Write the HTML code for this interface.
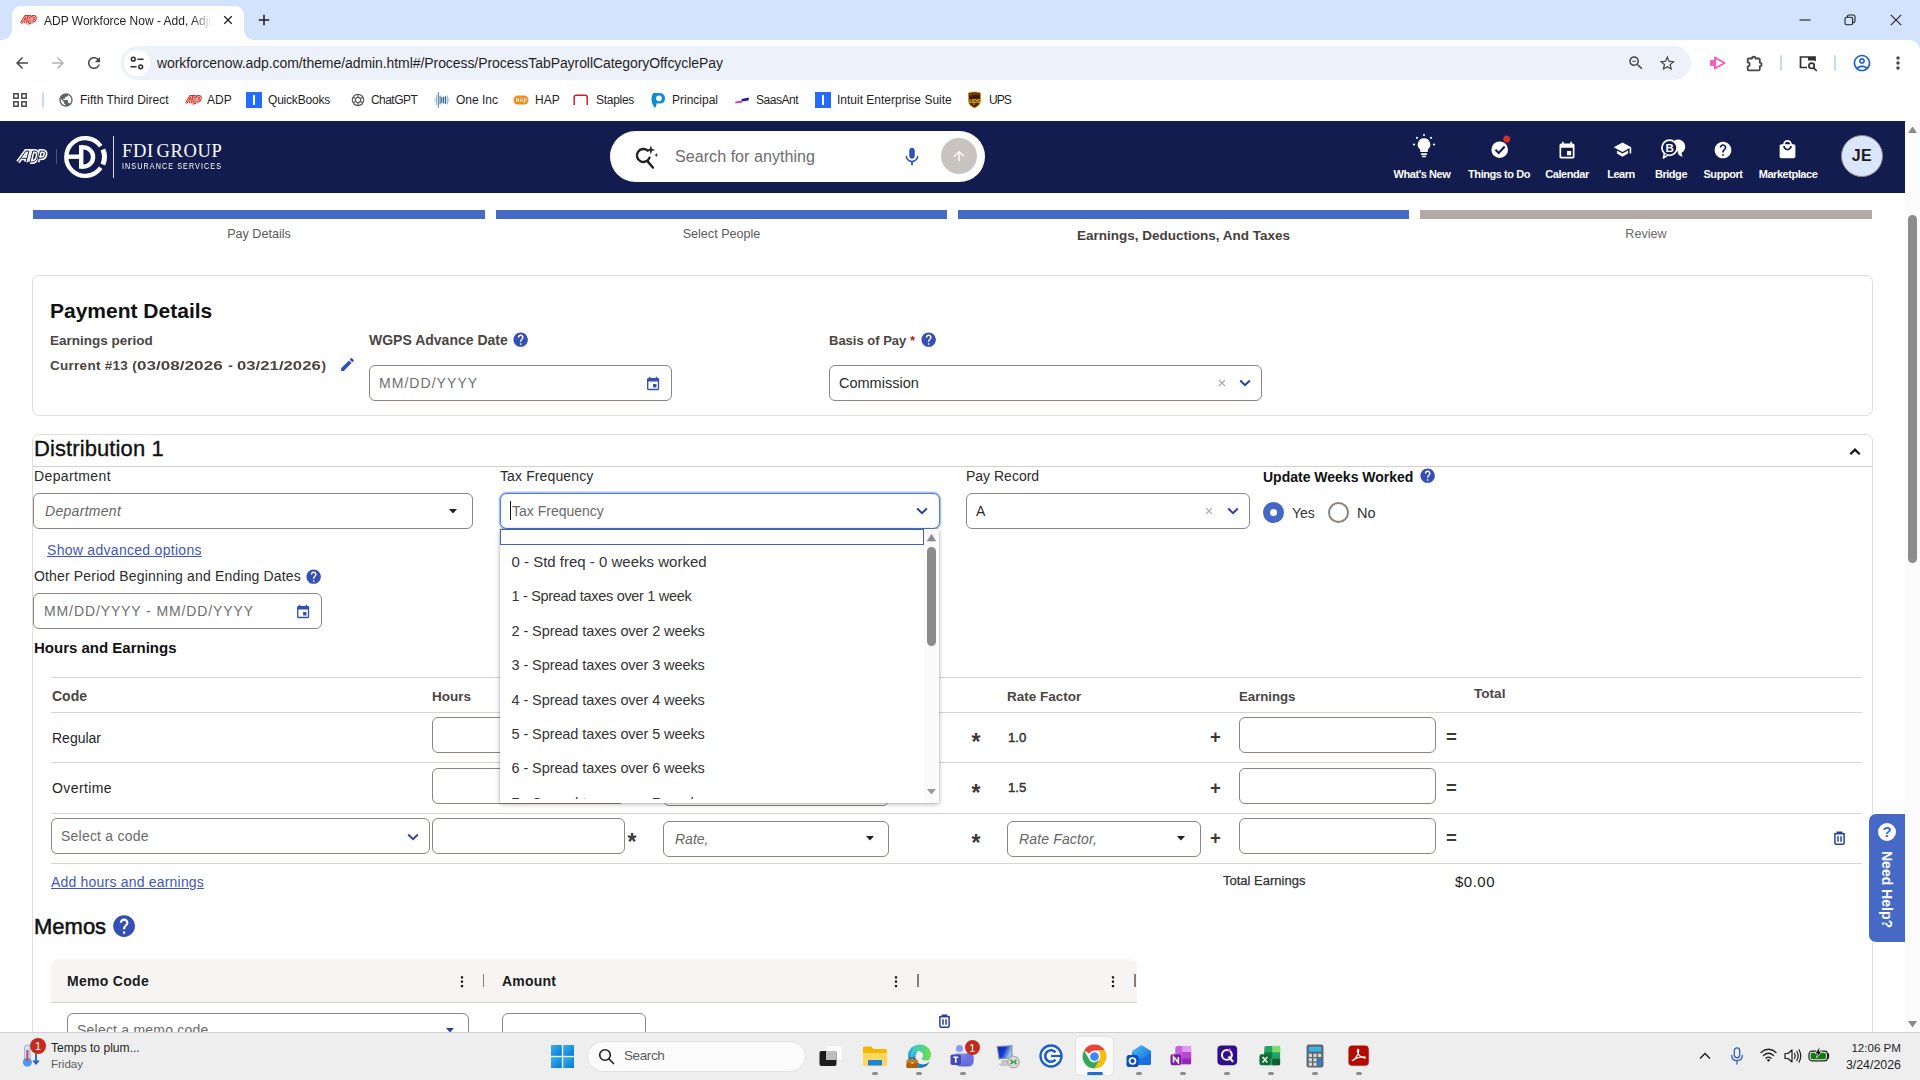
<!DOCTYPE html>
<html lang="en">
<head>
<meta charset="utf-8">
<title>ADP Workforce Now - Add, Adjust</title>
<style>
*{box-sizing:border-box;margin:0;padding:0}
html,body{width:1920px;height:1080px;overflow:hidden;background:#fff;font-family:"Liberation Sans",sans-serif;color:#1f1f1f}
body{position:relative}
.a{position:absolute}
.t{position:absolute;white-space:nowrap;height:20px;line-height:20px}
svg{position:absolute;overflow:visible}
/* ---------- browser chrome ---------- */
#tabstrip{left:0;top:0;width:1920px;height:40px;background:#d3e3fd}
#tab{left:12px;top:6px;width:232px;height:34px;background:#fff;border-radius:9px 9px 0 0}
#tab:before,#tab:after{content:"";position:absolute;bottom:0;width:10px;height:10px;background:radial-gradient(circle at 0 0,rgba(255,255,255,0) 9.5px,#fff 10px)}
#tab:before{left:-10px}
#tab:after{right:-10px;transform:scaleX(-1)}
#toolbar{left:0;top:40px;width:1920px;height:42px;background:#fff}
#omni{left:121px;top:46px;width:1570px;height:34px;border-radius:17px;background:#edf2fa}
#siteinfo{left:124px;top:50px;width:26px;height:26px;border-radius:13px;background:#fff}
#bookmarks{left:0;top:82px;width:1920px;height:39px;background:#fff}
.bm{font-size:12px;color:#1f1f1f;top:90px}
/* ---------- ADP header ---------- */
#hdr{left:0;top:121px;width:1905px;height:71.500px;background:#121c4e}
#search{left:610px;top:131px;width:375px;height:51px;border-radius:26px;background:#fff}
.nav{color:#fff;font-size:11px;font-weight:bold;top:164px;text-align:center;letter-spacing:-0.45px}
/* ---------- stepper ---------- */
.bar{top:210px;height:9px;background:#4669c6}
.step{top:224px;font-size:12.600px;color:#5a5a5a;text-align:center}
/* ---------- cards ---------- */
.card{border:1px solid #e2dedb;border-radius:7px;background:#fff}
.inp{position:absolute;height:36px;border:1px solid #8c8682;border-radius:6px;background:#fff}
.lbl{font-size:14px;color:#2b2b2b}
.lblb{font-size:14px;font-weight:bold;color:#4a4542}
.ph{font-size:14px;color:#6e6e6e}
.hl{position:absolute;height:1px;background:#d9d4d0}
.link{color:#3f57b5;text-decoration:underline;font-size:14px}
.rowl{font-size:14.500px;color:#1f1f1f}
.rf{font-size:13.200px;color:#333;-webkit-text-stroke:0.450px #333;margin-top:0.400px}
.op{font-size:23px;font-weight:bold;color:#3d3835;width:10px;text-align:center;margin-top:0.800px}
.pl{font-size:18.500px;font-weight:bold;color:#3d3835;width:12px;text-align:center;margin-top:0.700px;margin-left:0.400px}
.ddi{font-size:15px;color:#333}
/* ---------- taskbar ---------- */
.ind{top:1072px;width:6px;height:3px;border-radius:1.500px;background:#8d8d8d}
#taskbar{left:0;top:1032px;width:1920px;height:48px;background:#eeeeee;border-top:1px solid #cfcfcf}
</style>
</head>
<body>

<!-- ======= BROWSER CHROME ======= -->
<div id="tabstrip" class="a"></div>
<div id="tab" class="a"></div>
<div id="toolbar" class="a"></div>
<div id="omni" class="a"></div>
<div id="siteinfo" class="a"></div>
<div id="bookmarks" class="a"></div>
<!-- tab favicon (ADP red) -->
<svg style="left:20px;top:15px" width="17" height="9.500" viewBox="0 0 32 15" preserveAspectRatio="none"><g fill="none" stroke-linejoin="miter" stroke-miterlimit="2"><g stroke="#d0271d" stroke-width="4.300"><path d="M2 13L10 2H12.800L10 13M5.500 9.300H11"/><path d="M14 13L16.800 2H18Q22.800 2 21.600 7.500Q20.400 13 15.500 13H14"/><path d="M21.500 13L24.300 2H26Q30.200 2 29.400 5.600Q28.600 9.300 25 9.300H22.500"/></g><g stroke="#fff" stroke-width="1.100"><path d="M2 13L10 2H12.800L10 13M5.500 9.300H11"/><path d="M14 13L16.800 2H18Q22.800 2 21.600 7.500Q20.400 13 15.500 13H14"/><path d="M21.500 13L24.300 2H26Q30.200 2 29.400 5.600Q28.600 9.300 25 9.300H22.500"/></g></g></svg>
<div class="t" id="tabtitle" style="left:44px;top:10.700px;font-size:12px;color:#1f1f1f;width:170px;overflow:hidden;-webkit-mask-image:linear-gradient(90deg,#000 148px,transparent 168px);mask-image:linear-gradient(90deg,#000 148px,transparent 168px)">ADP Workforce Now - Add, Adjust</div>
<svg style="left:220px;top:12px" width="16" height="16" viewBox="0 0 24 24"><path fill="#1f1f1f" d="M18.3 7.1L16.9 5.7 12 10.6 7.1 5.7 5.7 7.1 10.6 12 5.7 16.9 7.1 18.3 12 13.4 16.9 18.3 18.3 16.9 13.4 12z"/></svg>
<svg style="left:255px;top:11px" width="18" height="18" viewBox="0 0 24 24"><path fill="#1f1f1f" d="M19 13h-6v6h-2v-6H5v-2h6V5h2v6h6v2z"/></svg>
<div class="a" style="left:1910px;top:40px;width:10px;height:10px;background:radial-gradient(circle at 0 100%,#fff 9.500px,#d3e3fd 10px)"></div>
<!-- window controls -->
<svg style="left:1799px;top:14px" width="12" height="12" viewBox="0 0 12 12"><path d="M0.5 6H11.5" stroke="#1f1f1f" stroke-width="1.1"/></svg>
<svg style="left:1844px;top:14px" width="12" height="12" viewBox="0 0 12 12"><g fill="none" stroke="#1f1f1f" stroke-width="1.1"><rect x="1" y="3.2" width="7.6" height="7.6" rx="1.6"/><path d="M3.4 3.2V2.6Q3.4 1 5 1H9.2Q11 1 11 2.8V7Q11 8.6 9.4 8.6H8.8"/></g></svg>
<svg style="left:1890px;top:14px" width="12" height="12" viewBox="0 0 12 12"><path d="M0.8 0.8L11.2 11.2M11.2 0.8L0.8 11.2" stroke="#1f1f1f" stroke-width="1.1"/></svg>
<!-- nav buttons -->
<svg style="left:13px;top:54px" width="18" height="18" viewBox="0 0 24 24"><path fill="#474747" d="M20 11H7.83l5.59-5.59L12 4l-8 8 8 8 1.41-1.41L7.83 13H20v-2z"/></svg>
<svg style="left:49px;top:54px" width="18" height="18" viewBox="0 0 24 24"><path fill="#b4b4b4" d="M12 4l-1.41 1.41L16.17 11H4v2h12.17l-5.58 5.59L12 20l8-8z"/></svg>
<svg style="left:85px;top:54px" width="18" height="18" viewBox="0 0 24 24"><path fill="#474747" d="M17.65 6.35C16.2 4.9 14.21 4 12 4c-4.42 0-7.99 3.58-7.99 8s3.57 8 7.99 8c3.73 0 6.84-2.55 7.73-6h-2.08c-.82 2.33-3.04 4-5.65 4-3.31 0-6-2.69-6-6s2.69-6 6-6c1.66 0 3.14.69 4.22 1.78L13 11h7V4l-2.35 2.35z"/></svg>
<!-- site info (tune) -->
<svg style="left:129px;top:55px" width="16" height="16" viewBox="0 0 16 16"><g fill="none" stroke="#303030" stroke-width="1.5" stroke-linecap="round"><circle cx="4.3" cy="4.2" r="1.9"/><path d="M9 4.2H14"/><circle cx="11.7" cy="11.8" r="1.9"/><path d="M2 11.8H7"/></g></svg>
<div class="t" id="url" style="left:157px;top:53px;font-size:14px;letter-spacing:-0.070px;color:#1f1f1f">workforcenow.adp.com/theme/admin.html#/Process/ProcessTabPayrollCategoryOffcyclePay</div>
<!-- omnibox right icons -->
<svg style="left:1627px;top:54px" width="18" height="18" viewBox="0 0 24 24"><path fill="#474747" d="M15.5 14h-.79l-.28-.27C15.41 12.59 16 11.11 16 9.5 16 5.91 13.09 3 9.5 3S3 5.91 3 9.5 5.91 16 9.5 16c1.61 0 3.09-.59 4.23-1.57l.27.28v.79l5 4.99L20.49 19l-4.99-5zm-6 0C7.01 14 5 11.99 5 9.500S7.010 5 9.500 5 14 7.010 14 9.500 11.990 14 9.500 14zM7 9h5v1.300H7z"/></svg>
<svg style="left:1658.400px;top:53.700px" width="18.600" height="18.600" viewBox="0 0 24 24"><path fill="#474747" d="M22 9.24l-7.190-.62L12 2 9.190 8.630 2 9.240l5.460 4.730L5.820 21 12 17.270 18.180 21l-1.630-7.030L22 9.240zM12 15.400l-3.760 2.270 1-4.280-3.320-2.880 4.380-.38L12 6.100l1.710 4.040 4.380.38-3.320 2.880 1 4.280L12 15.400z"/></svg>
<!-- pink extension -->
<svg style="left:1709px;top:55px" width="18" height="16" viewBox="0 0 18 16"><g fill="none" stroke="#f35cc0" stroke-width="2" stroke-linejoin="round"><path d="M6 2.500L15.500 8 6 13.500Z"/></g><rect x="1" y="5" width="5" height="6" rx="1" fill="#f35cc0"/></svg>
<!-- puzzle -->
<svg style="left:1744.500px;top:52.500px" width="19" height="19" viewBox="0 0 19 19"><path d="M3.700 5.500H7A1.750 1.750 0 0 1 10.500 5.500H13.800Q14.800 5.500 14.800 6.500V9.700A1.750 1.750 0 0 1 14.800 13.200V16.300Q14.800 17.300 13.800 17.300H3.700Q2.700 17.300 2.700 16.300V13.400A2 2 0 0 0 2.700 9.400V6.500Q2.700 5.500 3.700 5.500Z" fill="none" stroke="#474747" stroke-width="1.800" stroke-linejoin="round"/></svg>
<div class="a" style="left:1780px;top:55px;width:2px;height:16px;background:#c9d8f3;border-radius:1px"></div>
<!-- media control -->
<svg style="left:1797.800px;top:54px" width="20" height="18" viewBox="0 0 20 18"><g fill="none" stroke="#303030" stroke-width="1.7"><path d="M9 13.500H2.500V3H17V7"/><circle cx="13.600" cy="11.800" r="2.700"/><path d="M15.600 13.800L18.300 16.500" stroke-linecap="round"/></g><path d="M10 3H17V6.500H10Z" fill="#303030"/></svg>
<div class="a" style="left:1834px;top:55px;width:2px;height:16px;background:#c9d8f3;border-radius:1px"></div>
<svg style="left:1852px;top:53px" width="20" height="20" viewBox="0 0 24 24"><path fill="#1a5ecc" d="M12 2C6.480 2 2 6.480 2 12s4.480 10 10 10 10-4.480 10-10S17.520 2 12 2zM7.350 18.500C8.660 17.560 10.260 17 12 17s3.340.56 4.650 1.500c-1.310.94-2.910 1.500-4.650 1.500s-3.340-.56-4.650-1.500zm10.790-1.380C16.450 15.800 14.320 15 12 15s-4.450.8-6.140 2.120C4.700 15.730 4 13.950 4 12c0-4.420 3.580-8 8-8s8 3.580 8 8c0 1.950-.7 3.730-1.860 5.120zM12 6c-1.930 0-3.500 1.570-3.500 3.500S10.070 13 12 13s3.500-1.570 3.500-3.500S13.930 6 12 6zm0 5c-.83 0-1.500-.67-1.500-1.500S11.170 8 12 8s1.500.67 1.500 1.500S12.830 11 12 11z"/></svg>
<svg style="left:1888px;top:53px" width="20" height="20" viewBox="0 0 24 24"><path fill="#474747" d="M12 8c1.100 0 2-.9 2-2s-.9-2-2-2-2 .9-2 2 .9 2 2 2zm0 2c-1.100 0-2 .9-2 2s.9 2 2 2 2-.9 2-2-.9-2-2-2zm0 6c-1.100 0-2 .9-2 2s.9 2 2 2 2-.9 2-2-.9-2-2-2z"/></svg>
<!-- bookmarks -->
<svg style="left:13px;top:93px" width="14" height="14" viewBox="0 0 14 14"><g fill="none" stroke="#474747" stroke-width="1.5"><rect x="0.800" y="0.800" width="4.400" height="4.400"/><rect x="8.800" y="0.800" width="4.400" height="4.400"/><rect x="0.800" y="8.800" width="4.400" height="4.400"/><rect x="8.800" y="8.800" width="4.400" height="4.400"/></g></svg>
<div class="a" style="left:42px;top:92px;width:2px;height:16px;background:#c9d8f3;border-radius:1px"></div>
<svg style="left:58px;top:92px" width="16" height="16" viewBox="0 0 24 24"><path fill="#5f6368" d="M12 2C6.480 2 2 6.480 2 12s4.480 10 10 10 10-4.480 10-10S17.520 2 12 2zm-1 17.930c-3.950-.49-7-3.850-7-7.930 0-.62.08-1.210.21-1.790L9 15v1c0 1.100.9 2 2 2v1.930zm6.900-2.540c-.26-.81-1-1.390-1.900-1.390h-1v-3c0-.55-.45-1-1-1H8v-2h2c.55 0 1-.45 1-1V7h2c1.100 0 2-.9 2-2v-.41c2.930 1.190 5 4.060 5 7.410 0 2.080-.8 3.970-2.100 5.390z"/></svg>
<div class="t bm" id="bm1" style="left:80px">Fifth Third Direct</div>
<svg style="left:185px;top:95px" width="17" height="9.500" viewBox="0 0 32 15" preserveAspectRatio="none"><g fill="none" stroke-linejoin="miter" stroke-miterlimit="2"><g stroke="#d0271d" stroke-width="4.300"><path d="M2 13L10 2H12.800L10 13M5.500 9.300H11"/><path d="M14 13L16.800 2H18Q22.800 2 21.600 7.500Q20.400 13 15.500 13H14"/><path d="M21.500 13L24.300 2H26Q30.200 2 29.400 5.600Q28.600 9.300 25 9.300H22.500"/></g><g stroke="#fff" stroke-width="1.100"><path d="M2 13L10 2H12.800L10 13M5.500 9.300H11"/><path d="M14 13L16.800 2H18Q22.800 2 21.600 7.500Q20.400 13 15.500 13H14"/><path d="M21.500 13L24.300 2H26Q30.200 2 29.400 5.600Q28.600 9.300 25 9.300H22.500"/></g></g></svg>
<div class="t bm" id="bm2" style="left:207px">ADP</div>
<div class="a" style="left:246px;top:92px;width:16px;height:16px;background:#236cff"></div><div class="a" style="left:253px;top:95px;width:2px;height:10px;background:#fff"></div>
<div class="t bm" id="bm3" style="left:268px;letter-spacing:-0.200px">QuickBooks</div>
<svg style="left:351px;top:93px" width="14" height="14" viewBox="0 0 14 14"><g fill="none" stroke="#5a5a5a" stroke-width="1.200"><circle cx="7" cy="7" r="5.600"/><circle cx="7" cy="7" r="2.600"/><path d="M7 1.400V4.400M7 9.600V12.600M2.150 4.200L4.750 5.700M9.250 8.300L11.850 9.800M2.150 9.800L4.750 8.300M9.250 5.700L11.850 4.200"/></g></svg>
<div class="t bm" id="bm4" style="left:371px;letter-spacing:-0.550px">ChatGPT</div>
<svg style="left:434px;top:91px" width="16" height="18" viewBox="0 0 16 18"><g stroke-linecap="round" fill="none"><path d="M1 7.500V10.500M14.800 7.500V10.500" stroke="#a9c3d6" stroke-width="0.900"/><path d="M2.700 4.500V13.500M13.200 5V13" stroke="#7fa6c4" stroke-width="1"/><path d="M4.400 1.500V16.500" stroke="#5d8db1" stroke-width="1.100"/><path d="M6.100 5V13M11.500 5.500V12.500" stroke="#3f7199" stroke-width="1.100"/><path d="M7.800 6.500V11.500M9.700 6V12" stroke="#2c5a80" stroke-width="1.200"/></g></svg>
<div class="t bm" id="bm5" style="left:456px">One Inc</div>
<svg style="left:513px;top:95px" width="16" height="10" viewBox="0 0 16 10"><rect x="0.500" y="0.500" width="15" height="9" rx="4.500" fill="#f28a1e"/><path d="M3.500 3V7M3.500 5H5.500M5.500 3V7M7.500 7V4.500Q7.500 3.500 8.500 3.500Q9.500 3.500 9.500 4.500V7M11.500 3.500V8M11.500 3.500H12.500Q13.500 3.500 13.500 4.500Q13.500 5.500 12.500 5.500H11.500" stroke="#fff" stroke-width="0.800" fill="none"/></svg>
<div class="t bm" id="bm6" style="left:535px">HAP</div>
<svg style="left:573px;top:94px" width="16" height="12" viewBox="0 0 16 12"><path d="M1.200 11V3.300Q1.200 1.300 3.200 1.300H12.200Q14.200 1.300 14.200 3.300V11" fill="none" stroke="#cc1f2d" stroke-width="1.500"/></svg>
<div class="t bm" id="bm7" style="left:596px;letter-spacing:-0.280px">Staples</div>
<svg style="left:650px;top:92px" width="16" height="16" viewBox="0 0 16 16"><path d="M3 1.500Q2.500 1 3.500 1H9Q15 1 15 6.500Q15 11.500 9.500 11.500Q8 11.500 7 11L5.500 15.500Q5 16 4.500 15.500Q1 11 1.500 6Q2 2.500 3 1.500Z" fill="#0a8ed0"/><circle cx="9" cy="6.300" r="2.900" fill="#fff"/></svg>
<div class="t bm" id="bm8" style="left:672px">Principal</div>
<svg style="left:735px;top:94px" width="15" height="12" viewBox="0 0 15 12"><path d="M1 8.500Q3.500 7.500 6 8" stroke="#e6269a" stroke-width="1.800" fill="none" stroke-linecap="round"/><path d="M6.500 5L14 3.500L13.500 6.500L6.500 7.500Z" fill="#1c1f8f"/></svg>
<div class="t bm" id="bm9" style="left:756px;letter-spacing:-0.450px">SaasAnt</div>
<div class="a" style="left:815px;top:92px;width:16px;height:16px;background:#236cff"></div><div class="a" style="left:822px;top:95px;width:2px;height:10px;background:#fff"></div>
<div class="t bm" id="bm10" style="left:837px">Intuit Enterprise Suite</div>
<svg style="left:967px;top:91px" width="15" height="18" viewBox="0 0 15 18"><path d="M1 1.500Q7.500 -0.500 14 1.500V10Q14 14.500 7.500 17.500Q1 14.500 1 10Z" fill="#e8a814"/><path d="M1.900 2.300Q7.500 0.600 13.100 2.300V10Q13.100 13.800 7.500 16.400Q1.900 13.800 1.900 10Z" fill="#3b1d08"/><path d="M1.900 2.300Q7.500 0.600 13.100 2.300V4Q7 3 1.900 6Z" fill="#6b3a10"/><text x="7.500" y="11.500" font-family="Liberation Sans" font-size="6.800" font-weight="bold" text-anchor="middle" fill="#f3b41c" letter-spacing="-0.300">ups</text></svg>
<div class="t bm" id="bm11" style="left:989px;letter-spacing:-1px">UPS</div>

<!-- ======= ADP HEADER ======= -->
<div id="hdr" class="a"></div>
<div id="search" class="a"></div>
<!-- ADP white logo -->
<svg style="left:15.600px;top:149px" width="32" height="15" viewBox="0 0 32 15"><g fill="none" stroke-linejoin="miter" stroke-miterlimit="2"><g stroke="#fff" stroke-width="4"><path d="M2 13L10 2H12.800L10 13M5.500 9.300H11"/><path d="M14 13L16.800 2H18Q22.800 2 21.600 7.500Q20.400 13 15.500 13H14"/><path d="M21.500 13L24.300 2H26Q30.200 2 29.400 5.600Q28.600 9.300 25 9.300H22.500"/></g><g stroke="#121c4e" stroke-width="1"><path d="M2 13L10 2H12.800L10 13M5.500 9.300H11"/><path d="M14 13L16.800 2H18Q22.800 2 21.600 7.500Q20.400 13 15.500 13H14"/><path d="M21.500 13L24.300 2H26Q30.200 2 29.400 5.600Q28.600 9.300 25 9.300H22.500"/></g></g></svg>
<div class="a" style="left:56px;top:149px;width:1px;height:15px;background:#4b5380"></div>
<!-- FDI logo -->
<svg style="left:63px;top:135px" width="45" height="44" viewBox="63 135 45 44"><g fill="none" stroke="#fff" stroke-width="4.400"><path d="M100.700 146.200A18.900 18.900 0 1 0 100.700 167.800"/><path d="M102.900 149.500A18.900 18.900 0 0 1 102.900 164.500" stroke-width="5"/><path d="M81.200 145.200V168.700"/><path d="M81.200 147.400H83.500A9.600 9.600 0 0 1 83.500 166.600H81.200"/><path d="M68 156.700H81"/></g></svg>
<div class="a" style="left:113px;top:136px;width:1.400px;height:42px;background:#d5d7e2"></div>
<div class="t" id="fdi" style="left:122px;top:141px;font-family:'Liberation Serif',serif;font-size:18.500px;color:#fff;letter-spacing:0.650px">FDI<span style="letter-spacing:-2px"> </span>GROUP</div>
<div class="t" id="ins" style="left:122px;top:156px;font-size:8.500px;color:#fff;letter-spacing:1.300px;transform:scaleX(0.843);transform-origin:0 50%">INSURANCE SERVICES</div>
<!-- search -->
<svg style="left:630.500px;top:142px" width="29.500" height="29.500" viewBox="0 0 26 26"><g fill="none" stroke="#222" stroke-width="2.150" stroke-linecap="round"><path d="M14.700 7.600A5.700 5.700 0 1 0 16.300 13.800"/><path d="M15 17.500L19.300 22.500"/></g><path d="M17.500 3L18.500 6 21.500 7 18.500 8 17.500 11 16.500 8 13.500 7 16.500 6Z" fill="#2a2a2a"/><path d="M22.300 9.500L22.800 11 24.300 11.500 22.800 12 22.300 13.500 21.800 12 20.300 11.500 21.800 11Z" fill="#2a2a2a"/></svg>
<div class="t" id="sph" style="left:675px;top:146px;font-size:16.150px;color:#6d6d6d">Search for anything</div>
<svg style="left:901px;top:146px" width="22" height="22" viewBox="0 0 24 24"><path fill="#3550b4" d="M12 14c1.660 0 2.990-1.340 2.990-3L15 5c0-1.660-1.340-3-3-3S9 3.340 9 5v6c0 1.660 1.340 3 3 3zm5.300-3c0 3-2.540 5.100-5.300 5.100S6.700 14 6.700 11H5c0 3.410 2.720 6.230 6 6.720V21h2v-3.280c3.280-.48 6-3.300 6-6.720h-1.700z"/></svg>
<div class="a" style="left:941px;top:138px;width:36px;height:36px;border-radius:18px;background:#c9c4bf"></div>
<svg style="left:951px;top:148px" width="16" height="16" viewBox="0 0 24 24"><path fill="#fff" d="M4 12l1.410 1.410L11 7.830V20h2V7.830l5.580 5.590L20 12l-8-8-8 8z"/></svg>
<!-- nav icons -->
<svg style="left:1411px;top:133px" width="26" height="26" viewBox="0 0 26 26"><g fill="#fff"><path d="M13 5.200A6.300 6.300 0 0 0 9.200 16.500V19H16.800V16.500A6.300 6.300 0 0 0 13 5.200Z"/><rect x="9.800" y="20.200" width="6.400" height="1.700" rx="0.800"/><rect x="10.800" y="22.800" width="4.400" height="1.500" rx="0.700"/><circle cx="13" cy="2" r="1.100"/><circle cx="6" cy="4.800" r="1.100"/><circle cx="20" cy="4.800" r="1.100"/><circle cx="3" cy="11.500" r="1.100"/><circle cx="23" cy="11.500" r="1.100"/></g></svg>
<div class="t nav" id="n1" style="left:1372px;width:100px">What's New</div>
<svg style="left:1489px;top:134px" width="24" height="26" viewBox="0 0 24 26"><circle cx="10.700" cy="15.700" r="8.300" fill="#fff"/><path d="M6.500 15.800L9.700 19L15.700 12.500" fill="none" stroke="#121c4e" stroke-width="2.100"/><circle cx="17.700" cy="5" r="3.900" fill="#d93025" stroke="#121c4e" stroke-width="0.800"/></svg>
<div class="t nav" id="n2" style="left:1449px;width:100px">Things to Do</div>
<svg style="left:1557px;top:140.500px" width="20" height="20" viewBox="0 0 24 24"><path fill="#fff" d="M17 12h-5v5h5v-5zM16 1v2H8V1H6v2H5c-1.110 0-1.990.9-1.990 2L3 19c0 1.100.89 2 2 2h14c1.100 0 2-.9 2-2V5c0-1.100-.9-2-2-2h-1V1h-2zm3 18H5V8h14v11z"/></svg>
<div class="t nav" id="n3" style="left:1517px;width:100px">Calendar</div>
<svg style="left:1612.500px;top:140.300px" width="19" height="19" viewBox="0 0 24 24"><path fill="#fff" d="M5 13.180v4L12 21l7-3.820v-4L12 17l-7-3.820zM12 3L1 9l11 6 9-4.910V17h2V9L12 3z"/></svg>
<div class="t nav" id="n4" style="left:1571px;width:100px">Learn</div>
<svg style="left:1659px;top:138px" width="26" height="22" viewBox="0 0 26 22"><path d="M15.500 2.300A7 7 0 0 1 22.500 15L23.500 19L19.500 16.800" fill="#fff"/><circle cx="10.500" cy="9.800" r="7.600" fill="#121c4e" stroke="#fff" stroke-width="1.700"/><path d="M5.500 15.500L4.300 20L8.500 17.300" fill="#121c4e" stroke="#fff" stroke-width="1.500" stroke-linejoin="round"/><text x="10.600" y="14" font-family="Liberation Sans" font-weight="bold" font-size="11.500" fill="#fff" text-anchor="middle">B</text></svg>
<div class="t nav" id="n5" style="left:1621px;width:100px">Bridge</div>
<svg style="left:1713px;top:140px" width="20" height="20" viewBox="0 0 24 24"><path fill="#fff" d="M12 2C6.480 2 2 6.480 2 12s4.480 10 10 10 10-4.480 10-10S17.520 2 12 2zm1 17h-2v-2h2v2zm2.070-7.750l-.9.92C13.450 12.900 13 13.500 13 15h-2v-.5c0-1.100.45-2.100 1.170-2.830l1.240-1.260c.37-.36.59-.86.59-1.410 0-1.100-.9-2-2-2s-2 .9-2 2H8c0-2.210 1.790-4 4-4s4 1.790 4 4c0 .88-.36 1.680-.93 2.250z"/></svg>
<div class="t nav" id="n6" style="left:1673px;width:100px">Support</div>
<svg style="left:1777px;top:139px" width="21" height="21" viewBox="0 0 24 24"><path fill="#fff" d="M19 6h-2c0-2.760-2.240-5-5-5S7 3.240 7 6H5c-1.100 0-1.990.9-1.990 2L3 20c0 1.100.9 2 2 2h14c1.100 0 2-.9 2-2V8c0-1.100-.9-2-2-2zm-7-3c1.660 0 3 1.340 3 3H9c0-1.660 1.340-3 3-3zm0 10c-2.760 0-5-2.240-5-5h2c0 1.660 1.340 3 3 3s3-1.340 3-3h2c0 2.760-2.240 5-5 5z"/></svg>
<div class="t nav" id="n7" style="left:1738px;width:100px">Marketplace</div>
<div class="a" style="left:1841px;top:135px;width:42px;height:42px;border-radius:21px;background:#dbe6fa;border:1.500px solid #8e8a8c"></div>
<div class="t" id="je" style="left:1841px;top:146px;width:42px;text-align:center;font-size:16px;font-weight:bold;color:#1c1c1c;letter-spacing:0.500px">JE</div>

<!-- ======= STEPPER ======= -->
<div class="a bar" style="left:33px;width:452px"></div>
<div class="a bar" style="left:496px;width:451px"></div>
<div class="a bar" style="left:958px;width:451px"></div>
<div class="a bar" style="left:1420px;width:452px;background:#b3aaa6"></div>
<div class="t step" style="left:33px;width:452px">Pay Details</div>
<div class="t step" style="left:496px;width:451px">Select People</div>
<div class="t step" style="left:958px;width:451px;font-weight:bold;color:#463f3b;top:226px;font-size:13.500px">Earnings, Deductions, And Taxes</div>
<div class="t step" style="left:1420px;width:452px;color:#6a6a6a">Review</div>

<!-- ======= PAYMENT DETAILS CARD ======= -->
<div class="a card" style="left:32px;top:275px;width:1841px;height:141px"></div>
<div class="t" id="pd" style="left:50px;top:296px;height:30px;line-height:30px;font-size:21px;font-weight:bold;color:#111">Payment Details</div>
<div class="t lblb" id="ep" style="left:50px;top:331px;font-size:13.500px">Earnings period</div>
<div class="t lblb" id="cur" style="left:50px;top:356px;font-size:13.500px"><span style="letter-spacing:0.280px">Current #13 (</span><span style="display:inline-block;width:87.300px;vertical-align:top"><span style="display:inline-block;transform:scaleX(1.268);transform-origin:0 50%">03/08/2026</span></span><span style="letter-spacing:0.250px;white-space:pre"> - </span><span style="display:inline-block;width:84.600px;vertical-align:top"><span style="display:inline-block;transform:scaleX(1.240);transform-origin:0 50%">03/21/2026</span></span><span>)</span></div>
<svg style="left:339px;top:356px" width="17" height="17" viewBox="0 0 24 24"><path fill="#3550b4" d="M3 17.250V21h3.750L17.810 9.940l-3.750-3.750L3 17.250zM20.710 7.040c.39-.39.39-1.020 0-1.410l-2.340-2.340c-.39-.39-1.020-.39-1.410 0l-1.830 1.830 3.750 3.750 1.830-1.830z"/></svg>
<div class="t lblb" id="wg" style="left:369px;top:330px">WGPS Advance Date</div>
<svg class="q" style="left:512px;top:331px" width="17.300" height="17.300" viewBox="0 0 24 24"><path fill="#3550b4" d="M12 2C6.480 2 2 6.480 2 12s4.480 10 10 10 10-4.480 10-10S17.520 2 12 2zm1 17h-2v-2h2v2zm2.070-7.750l-.9.92C13.450 12.900 13 13.500 13 15h-2v-.5c0-1.100.45-2.100 1.170-2.830l1.240-1.260c.37-.36.59-.86.59-1.410 0-1.100-.9-2-2-2s-2 .9-2 2H8c0-2.210 1.790-4 4-4s4 1.790 4 4c0 .88-.36 1.680-.93 2.250z"/></svg>
<div class="inp" style="left:369px;top:365px;width:303px"></div>
<div class="t ph" id="mm" style="left:379px;top:373px;letter-spacing:1.050px">MM/DD/YYYY</div>
<svg style="left:644.500px;top:376px" width="16.200" height="16.200" viewBox="0 0 24 24"><path fill="#3550b4" d="M17 12h-5v5h5v-5zM16 1v2H8V1H6v2H5c-1.110 0-1.990.9-1.990 2L3 19c0 1.100.89 2 2 2h14c1.100 0 2-.9 2-2V5c0-1.100-.9-2-2-2h-1V1h-2zm3 18H5V8h14v11z"/></svg>
<div class="t lblb" id="bop" style="left:829px;top:330.600px;font-size:13px">Basis of Pay <span style="color:#b3261e">*</span></div>
<svg class="q" style="left:919.700px;top:331.400px" width="17.300" height="17.300" viewBox="0 0 24 24"><path fill="#3550b4" d="M12 2C6.480 2 2 6.480 2 12s4.480 10 10 10 10-4.480 10-10S17.520 2 12 2zm1 17h-2v-2h2v2zm2.070-7.750l-.9.92C13.450 12.900 13 13.500 13 15h-2v-.5c0-1.100.45-2.100 1.170-2.830l1.240-1.260c.37-.36.59-.86.59-1.410 0-1.100-.9-2-2-2s-2 .9-2 2H8c0-2.210 1.790-4 4-4s4 1.790 4 4c0 .88-.36 1.680-.93 2.250z"/></svg>
<div class="inp" style="left:829px;top:365px;width:433px"></div>
<div class="t" id="comm" style="left:839px;top:373px;font-size:14.500px;color:#2b2b2b">Commission</div>
<svg style="left:1218px;top:379px" width="8" height="8" viewBox="0 0 8 8"><path d="M1 1L7 7M7 1L1 7" stroke="#ababab" stroke-width="1.200"/></svg>
<svg style="left:1239px;top:379px" width="12" height="8" viewBox="0 0 12 8"><path d="M1.200 1.500L6 6.200L10.800 1.500" fill="none" stroke="#2a3f9d" stroke-width="2"/></svg>

<!-- ======= DISTRIBUTION CARD ======= -->
<div class="a card" style="left:32px;top:434px;width:1841px;height:700px"></div>
<div class="t" id="d1" style="left:34px;top:434px;height:30px;line-height:30px;letter-spacing:0.100px;font-size:22px;color:#111;-webkit-text-stroke:0.350px #111">Distribution 1</div>
<svg style="left:1849px;top:447px" width="12" height="9" viewBox="0 0 12 9"><path d="M1.300 7.300L6 2.600L10.700 7.300" fill="none" stroke="#1a1a1a" stroke-width="2.300"/></svg>
<div class="hl" style="left:33px;top:466px;width:1839px;background:#d5d0cc"></div>
<div class="t lbl" id="dep" style="left:34px;top:466px;letter-spacing:0.380px">Department</div>
<div class="inp" style="left:33px;top:493px;width:440px"></div>
<div class="t ph" id="depph" style="left:45px;top:501px;letter-spacing:0.300px;font-style:italic;color:#666">Department</div>
<svg style="left:449px;top:509px" width="8" height="5" viewBox="0 0 8 5"><path d="M0 0H8L4 4.500Z" fill="#1f1f1f"/></svg>
<div class="t link" id="sao" style="left:47px;top:540px;letter-spacing:0.290px">Show advanced options</div>
<div class="t lbl" id="opb" style="left:34px;top:566px;letter-spacing:0.160px">Other Period Beginning and Ending Dates</div>
<svg class="q" style="left:304.500px;top:567.500px" width="17.300" height="17.300" viewBox="0 0 24 24"><path fill="#3550b4" d="M12 2C6.480 2 2 6.480 2 12s4.480 10 10 10 10-4.480 10-10S17.520 2 12 2zm1 17h-2v-2h2v2zm2.070-7.750l-.9.92C13.450 12.900 13 13.500 13 15h-2v-.5c0-1.100.45-2.100 1.170-2.830l1.240-1.260c.37-.36.59-.86.59-1.410 0-1.100-.9-2-2-2s-2 .9-2 2H8c0-2.210 1.790-4 4-4s4 1.790 4 4c0 .88-.36 1.680-.93 2.250z"/></svg>
<div class="inp" style="left:33px;top:593px;width:289px"></div>
<div class="t ph" id="mm2" style="left:44px;top:601px;letter-spacing:0.890px">MM/DD/YYYY - MM/DD/YYYY</div>
<svg style="left:294.500px;top:604px" width="16.200" height="16.200" viewBox="0 0 24 24"><path fill="#3550b4" d="M17 12h-5v5h5v-5zM16 1v2H8V1H6v2H5c-1.110 0-1.990.9-1.990 2L3 19c0 1.100.89 2 2 2h14c1.100 0 2-.9 2-2V5c0-1.100-.9-2-2-2h-1V1h-2zm3 18H5V8h14v11z"/></svg>
<div class="t" id="hae" style="left:34px;top:638px;font-size:15px;font-weight:bold;color:#111">Hours and Earnings</div>
<!-- tax frequency -->
<div class="t lbl" id="tf" style="left:500px;top:466px;letter-spacing:0.120px">Tax Frequency</div>
<div class="inp" style="left:499.700px;top:492.600px;width:440.200px;height:36.600px;border:1.200px solid #4b7dd6;border-radius:7px;box-shadow:0 0 0 1.400px #b0c3ee"></div>
<div class="a" style="left:510px;top:501px;width:1px;height:19px;background:#111"></div>
<div class="t ph" id="tfph" style="left:512px;top:501px;color:#6a6a6a">Tax Frequency</div>
<svg style="left:916px;top:507.400px" width="12" height="8" viewBox="0 0 12 8"><path d="M1.200 1.500L6 6.200L10.800 1.500" fill="none" stroke="#2a3f9d" stroke-width="2"/></svg>
<!-- pay record -->
<div class="t lbl" id="pr" style="left:966px;top:466px">Pay Record</div>
<div class="inp" style="left:966px;top:493px;width:284px"></div>
<div class="t" id="pra" style="left:976px;top:501px;font-size:14px;color:#2b2b2b">A</div>
<svg style="left:1205px;top:507px" width="8" height="8" viewBox="0 0 8 8"><path d="M1 1L7 7M7 1L1 7" stroke="#b0b0b0" stroke-width="1.200"/></svg>
<svg style="left:1227px;top:507px" width="12" height="8" viewBox="0 0 12 8"><path d="M1.200 1.500L6 6.200L10.800 1.500" fill="none" stroke="#2a3f9d" stroke-width="2"/></svg>
<!-- update weeks worked -->
<div class="t" id="uww" style="left:1263px;top:466.500px;font-size:14px;font-weight:bold;color:#111">Update Weeks Worked</div>
<svg class="q" style="left:1419px;top:466.800px" width="17.300" height="17.300" viewBox="0 0 24 24"><path fill="#3550b4" d="M12 2C6.480 2 2 6.480 2 12s4.480 10 10 10 10-4.480 10-10S17.520 2 12 2zm1 17h-2v-2h2v2zm2.070-7.750l-.9.92C13.450 12.900 13 13.500 13 15h-2v-.5c0-1.100.45-2.100 1.170-2.830l1.240-1.260c.37-.36.59-.86.59-1.410 0-1.100-.9-2-2-2s-2 .9-2 2H8c0-2.210 1.790-4 4-4s4 1.790 4 4c0 .88-.36 1.680-.93 2.250z"/></svg>
<div class="a" style="left:1263px;top:502px;width:21px;height:21px;border-radius:11px;background:#4568c5"></div>
<div class="a" style="left:1270px;top:509px;width:7px;height:7px;border-radius:4px;background:#fff"></div>
<div class="t" id="yes" style="left:1292px;top:503px;font-size:14px;color:#333">Yes</div>
<div class="a" style="left:1328px;top:502px;width:21px;height:21px;border-radius:11px;background:#fff;border:2px solid #8d857f"></div>
<div class="t" id="no" style="left:1357px;top:503px;font-size:14.500px;color:#333">No</div>


<div class="hl" style="left:51px;top:677px;width:1811px"></div>
<div class="hl" style="left:51px;top:712px;width:1811px"></div>
<div class="hl" style="left:51px;top:762px;width:1811px"></div>
<div class="hl" style="left:51px;top:813px;width:1811px"></div>
<div class="hl" style="left:51px;top:863px;width:1811px"></div>
<div class="t lblb" id="hc" style="left:52px;top:686px">Code</div>
<div class="t lblb" id="hh" style="left:432px;top:686.700px;font-size:13.500px">Hours</div>
<div class="t lblb" id="hrf" style="left:1007px;top:686.700px;font-size:13.500px">Rate Factor</div>
<div class="t lblb" id="he" style="left:1239px;top:686.700px;font-size:13.200px">Earnings</div>
<div class="t lblb" id="ht" style="left:1474px;top:683.700px;font-size:13.600px">Total</div>
<!-- row 1 -->
<div class="t rowl" id="r1" style="left:52px;top:728px;font-size:14px">Regular</div>
<div class="inp" style="left:432px;top:717px;width:193px"></div>
<div class="inp" style="left:663px;top:720px;width:226px"></div>
<div class="t op" style="left:971px;top:731px">*</div>
<div class="t rf" id="rf1" style="left:1008px;top:728px">1.0</div>
<div class="t pl" style="left:1209px;top:726px">+</div>
<div class="inp" style="left:1239px;top:717px;width:197px"></div>
<div class="t pl" style="left:1445px;top:726px">=</div>
<!-- row 2 -->
<div class="t rowl" id="r2" style="left:52px;top:778px;font-size:14px;letter-spacing:0.400px">Overtime</div>
<div class="inp" style="left:432px;top:768px;width:193px"></div>
<div class="inp" style="left:663px;top:770px;width:226px"></div>
<div class="t op" style="left:971px;top:782px">*</div>
<div class="t rf" id="rf2" style="left:1008px;top:778px">1.5</div>
<div class="t pl" style="left:1209px;top:777px">+</div>
<div class="inp" style="left:1239px;top:768px;width:197px"></div>
<div class="t pl" style="left:1445px;top:777px">=</div>
<!-- row 3 -->
<div class="inp" style="left:51px;top:818px;width:379px"></div>
<div class="t ph" id="sac" style="left:61px;top:826px;letter-spacing:0.220px;color:#6a6a6a">Select a code</div>
<svg style="left:406.500px;top:832.500px" width="12" height="8" viewBox="0 0 12 8"><path d="M1.200 1.500L6 6.200L10.800 1.500" fill="none" stroke="#2a3f9d" stroke-width="1.800"/></svg>
<div class="inp" style="left:432px;top:818px;width:193px"></div>
<div class="t op" style="left:627px;top:831px;font-size:23px">*</div>
<div class="inp" style="left:663px;top:821px;width:226px"></div>
<div class="t ph" id="rate" style="left:675px;top:829px;font-style:italic;color:#666">Rate,</div>
<svg style="left:866px;top:836px" width="8" height="5" viewBox="0 0 8 5"><path d="M0 0H8L4 4.500Z" fill="#1f1f1f"/></svg>
<div class="t op" style="left:971px;top:832px">*</div>
<div class="inp" style="left:1007px;top:821px;width:194px"></div>
<div class="t ph" id="ratef" style="left:1019px;top:829px;letter-spacing:0.150px;font-style:italic;color:#666">Rate Factor,</div>
<svg style="left:1177px;top:836px" width="8" height="5" viewBox="0 0 8 5"><path d="M0 0H8L4 4.500Z" fill="#1f1f1f"/></svg>
<div class="t pl" style="left:1209px;top:827px">+</div>
<div class="inp" style="left:1239px;top:818px;width:197px"></div>
<div class="t pl" style="left:1445px;top:827px">=</div>
<svg style="left:1833px;top:831px" width="13" height="14" viewBox="0 0 13 14"><g fill="none" stroke="#2a3f9d" stroke-width="1.500"><path d="M1.300 2.700H11.700"/><path d="M4.300 2.500V1.300H8.700V2.500"/><path d="M1.900 2.700V12Q1.900 13.200 3.100 13.200H9.900Q11.100 13.200 11.100 12V2.700"/><path d="M5 5.300V10.700M8 5.300V10.700"/></g></svg>
<!-- footer -->
<div class="t link" id="ahe" style="left:51px;top:872px;letter-spacing:0.200px">Add hours and earnings</div>
<div class="t" id="te" style="left:1223px;top:871px;font-size:13px;color:#333;-webkit-text-stroke:0.250px #333">Total Earnings</div>
<div class="t" id="tot" style="left:1455px;top:872px;font-size:15px;letter-spacing:0.500px;color:#1a1a1a">$0.00</div>


<div class="t" id="memos" style="left:34px;top:912px;height:30px;line-height:30px;font-size:22px;color:#111;-webkit-text-stroke:0.550px #111">Memos</div>
<svg style="left:110.900px;top:912.900px" width="26.200" height="26.200" viewBox="0 0 24 24"><path fill="#3550b4" d="M12 2C6.480 2 2 6.480 2 12s4.480 10 10 10 10-4.480 10-10S17.520 2 12 2zm1 17h-2v-2h2v2zm2.070-7.750l-.9.92C13.450 12.900 13 13.500 13 15h-2v-.5c0-1.100.45-2.100 1.170-2.830l1.240-1.260c.37-.36.59-.86.59-1.410 0-1.100-.9-2-2-2s-2 .9-2 2H8c0-2.210 1.790-4 4-4s4 1.790 4 4c0 .88-.36 1.680-.93 2.250z"/></svg>
<div class="a" style="left:51px;top:959px;width:1086px;height:43px;background:#f7f5f4;border-radius:7px 7px 0 0"></div>
<div class="hl" style="left:51px;top:1002px;width:1086px"></div>
<div class="t" id="mc" style="left:67px;top:971px;font-size:14px;font-weight:bold;color:#1a1a1a;letter-spacing:0.300px">Memo Code</div>
<div class="t" id="amt" style="left:502px;top:971px;font-size:14px;font-weight:bold;color:#1a1a1a;letter-spacing:0.200px">Amount</div>
<svg style="left:460px;top:975px" width="4" height="13" viewBox="0 0 4 13"><g fill="#111"><rect x="0.900" y="1.200" width="2.200" height="2.200" rx="0.400"/><rect x="0.900" y="5.600" width="2.200" height="2.200" rx="0.400"/><rect x="0.900" y="10" width="2.200" height="2.200" rx="0.400"/></g></svg>
<div class="a" style="left:483px;top:974px;width:1px;height:13px;background:#857d76"></div>
<svg style="left:894px;top:975px" width="4" height="13" viewBox="0 0 4 13"><g fill="#111"><rect x="0.900" y="1.200" width="2.200" height="2.200" rx="0.400"/><rect x="0.900" y="5.600" width="2.200" height="2.200" rx="0.400"/><rect x="0.900" y="10" width="2.200" height="2.200" rx="0.400"/></g></svg>
<div class="a" style="left:917px;top:974px;width:1.500px;height:13px;background:#857d76"></div>
<svg style="left:1111px;top:975px" width="4" height="13" viewBox="0 0 4 13"><g fill="#111"><rect x="0.900" y="1.200" width="2.200" height="2.200" rx="0.400"/><rect x="0.900" y="5.600" width="2.200" height="2.200" rx="0.400"/><rect x="0.900" y="10" width="2.200" height="2.200" rx="0.400"/></g></svg>
<div class="a" style="left:1134px;top:974px;width:1.500px;height:13px;background:#857d76"></div>
<div class="inp" style="left:67px;top:1013px;width:402px"></div>
<div class="t ph" style="left:77px;top:1020px;color:#6a6a6a;letter-spacing:0.220px">Select a memo code</div>
<svg style="left:446px;top:1028px" width="8" height="5" viewBox="0 0 8 5"><path d="M0 0H8L4 4.500Z" fill="#2a3f9d"/></svg>
<div class="inp" style="left:502px;top:1013px;width:144px"></div>
<svg style="left:938px;top:1013.700px" width="13" height="14" viewBox="0 0 13 14"><g fill="none" stroke="#2a3f9d" stroke-width="1.500"><path d="M1.300 2.700H11.700"/><path d="M4.300 2.500V1.300H8.700V2.500"/><path d="M1.900 2.700V12Q1.900 13.200 3.100 13.200H9.900Q11.100 13.200 11.100 12V2.700"/><path d="M5 5.300V10.700M8 5.300V10.700"/></g></svg>


<div class="a" id="dd" style="left:500px;top:529px;width:439px;height:274px;background:#fff;box-shadow:0 1px 5px rgba(0,0,0,0.300),0 0 1px rgba(0,0,0,0.250);overflow:hidden">
<div class="a" style="left:0;top:-0.500px;width:424px;height:16.300px;border:1.300px solid #3f63c3;background:#fff"></div>
<div class="t ddi" id="i0" style="left:11.500px;top:22.900px">0 - Std freq - 0 weeks worked</div>
<div class="t ddi" id="i1" style="left:11.500px;top:57.300px;font-size:14.500px;letter-spacing:-0.310px">1 - Spread taxes over 1 week</div>
<div class="t ddi" id="i2" style="left:11.500px;top:91.700px;font-size:14.500px;letter-spacing:-0.090px">2 - Spread taxes over 2 weeks</div>
<div class="t ddi" style="left:11.500px;top:126.100px;font-size:14.500px;letter-spacing:-0.090px">3 - Spread taxes over 3 weeks</div>
<div class="t ddi" style="left:11.500px;top:160.500px;font-size:14.500px;letter-spacing:-0.090px">4 - Spread taxes over 4 weeks</div>
<div class="t ddi" style="left:11.500px;top:194.900px;font-size:14.500px;letter-spacing:-0.090px">5 - Spread taxes over 5 weeks</div>
<div class="t ddi" style="left:11.500px;top:229.300px;font-size:14.500px;letter-spacing:-0.090px">6 - Spread taxes over 6 weeks</div>
<div class="t ddi" style="left:11.500px;top:263.700px;font-size:14.500px;letter-spacing:-0.090px">7 - Spread taxes over 7 weeks</div>
<div class="a" style="left:0;top:270.400px;width:424px;height:4px;background:#fff"></div>
<div class="a" style="left:424.300px;top:0;width:15px;height:274px;background:#fafafa"></div>
<svg style="left:426.800px;top:4.800px" width="9" height="7" viewBox="0 0 9 7"><path d="M0.300 7L4.500 0.300L8.700 7Z" fill="#8a8a8a" stroke="#8a8a8a" stroke-width="0.600" stroke-linejoin="round"/></svg>
<div class="a" style="left:427px;top:18px;width:9px;height:99px;border-radius:4.500px;background:#8c8c8c"></div>
<svg style="left:426.500px;top:259.500px" width="9" height="6" viewBox="0 0 9 6"><path d="M0 0L4.500 5.500L9 0Z" fill="#9a9a9a"/></svg>
</div>


<div class="a" style="left:1905px;top:121px;width:15px;height:911px;background:#fbfbfb"></div>
<svg style="left:1908px;top:126px" width="9" height="7" viewBox="0 0 9 7"><path d="M0 7L4.500 0.500L9 7Z" fill="#8a8a8a"/></svg>
<div class="a" style="left:1908px;top:215px;width:9px;height:348px;border-radius:4.500px;background:#8c8c8c"></div>
<svg style="left:1908px;top:1021px" width="9" height="7" viewBox="0 0 9 7"><path d="M0 0L4.500 6.500L9 0Z" fill="#8a8a8a"/></svg>
<div class="a" style="left:1869px;top:814px;width:36px;height:128px;background:#4669c6;border-radius:7px 0 0 7px"></div>
<div class="a" style="left:1878px;top:823px;width:18px;height:18px;border-radius:9px;background:#fff"></div>
<div class="t" style="left:1878px;top:822px;width:18px;text-align:center;font-size:15px;font-weight:bold;color:#4669c6">?</div>
<div class="t" id="nh" style="left:1887px;top:851px;font-size:14px;font-weight:bold;color:#fff;transform-origin:0 0;transform:rotate(90deg) translateY(-10px)">Need Help?</div>


<!-- ======= TASKBAR ======= -->
<div id="taskbar" class="a"></div>
<!-- weather widget -->
<svg style="left:21px;top:1042.500px" width="20" height="24.500" viewBox="0 0 22 28" preserveAspectRatio="none"><rect x="4" y="2" width="6" height="20" rx="3" fill="#cfe3f7" stroke="#7fb2e5" stroke-width="1"/><circle cx="7" cy="22" r="5" fill="#4a9be8"/><rect x="5.800" y="8" width="2.400" height="13" fill="#e0455a"/><path d="M16.500 12V23M13.500 20L16.500 23.500L19.500 20" stroke="#2458d6" stroke-width="2" fill="none"/></svg>
<div class="a" style="left:30px;top:1038px;width:16px;height:16px;border-radius:8px;background:#c42b1c"></div>
<div class="t" style="left:30px;top:1036px;width:16px;text-align:center;font-size:11px;color:#fff">1</div>
<div class="t" id="tw1" style="left:51px;top:1038.400px;font-size:12.100px;color:#1f1f1f">Temps to plum...</div>
<div class="t" id="tw2" style="left:51px;top:1054px;font-size:11.500px;color:#606060">Friday</div>
<!-- windows logo -->
<svg style="left:551px;top:1044.500px" width="23" height="23" viewBox="0 0 23 23"><defs><linearGradient id="wg1" x1="0" y1="0" x2="1" y2="1"><stop offset="0" stop-color="#36b5f0"/><stop offset="1" stop-color="#0a74d4"/></linearGradient></defs><g fill="url(#wg1)"><rect x="0" y="0" width="10.800" height="10.800"/><rect x="12.200" y="0" width="10.800" height="10.800"/><rect x="0" y="12.200" width="10.800" height="10.800"/><rect x="12.200" y="12.200" width="10.800" height="10.800"/></g></svg>
<!-- search pill -->
<div class="a" style="left:587px;top:1041px;width:219px;height:31px;border-radius:15.500px;background:#fbfbfb;border:1px solid #e1e1e1"></div>
<svg style="left:598px;top:1048px" width="17" height="17" viewBox="0 0 17 17"><g fill="none" stroke="#1f1f1f" stroke-width="1.600" stroke-linecap="round"><circle cx="7" cy="7" r="5.300"/><path d="M11 11L15.500 15.500"/></g></svg>
<div class="t" id="tsearch" style="left:624px;top:1046px;font-size:13.500px;letter-spacing:-0.400px;color:#5c5c5c">Search</div>
<!-- task view -->
<svg style="left:819px;top:1045px" width="24" height="22" viewBox="0 0 24 22"><rect x="7" y="0.500" width="16.500" height="15" rx="2" fill="#fdfdfd" stroke="#e2e2e2" stroke-width="0.600"/><rect x="0.500" y="6" width="17" height="15" rx="2" fill="#1c1c1c"/><rect x="7" y="6" width="10.500" height="9" fill="#bdbdbd"/></svg>
<!-- file explorer -->
<svg style="left:862px;top:1045px" width="26" height="22" viewBox="0 0 26 22"><path d="M1 3Q1 1.500 2.500 1.500H9L11.500 4H23.500Q25 4 25 5.500V19Q25 20.500 23.500 20.500H2.500Q1 20.500 1 19Z" fill="#f5b700"/><path d="M1 8H25V19Q25 20.500 23.500 20.500H2.500Q1 20.500 1 19Z" fill="#ffd75e"/><rect x="6" y="15" width="14" height="5.500" fill="#1a85d6"/></svg>
<div class="a ind" style="left:872px"></div>
<!-- edge -->
<svg style="left:906px;top:1043px" width="26" height="26" viewBox="0 0 26 26"><defs><linearGradient id="eg1" x1="0" y1="0.200" x2="1" y2="0.800"><stop offset="0" stop-color="#2ab7ee"/><stop offset="0.500" stop-color="#1e8fdf"/><stop offset="1" stop-color="#0d55a8"/></linearGradient><linearGradient id="eg2" x1="0" y1="0" x2="1" y2="0.300"><stop offset="0" stop-color="#2fc4e8"/><stop offset="0.600" stop-color="#4fd58a"/><stop offset="1" stop-color="#6ddc55"/></linearGradient></defs><path d="M2 13Q2 3 13 1.500Q24.500 2 25 12Q25 17.500 19 17.500Q16 17.500 15.500 15.500Q17.500 14 17 11.500Q16 8 12 8Q6 8.500 5 14.500Q4.500 20 9 24Q2 21 2 13Z" fill="url(#eg2)"/><path d="M5 14.500Q6 8.500 12 8Q9.500 10 9.500 14Q10 20.500 16.500 21.500Q21 21.500 23.500 18.500Q21 25 13.500 25Q6 24.500 5 17Z" fill="url(#eg1)"/><path d="M2 13Q2.500 7 8 4Q4.500 8 5 14.500Q5 20 9 24Q2 21 2 13Z" fill="#2aa6e6"/><rect x="0.500" y="16.500" width="11.500" height="8.500" rx="1.200" fill="#c97a1c"/><rect x="0.500" y="20" width="11.500" height="5" rx="1" fill="#a85f10"/><path d="M4 16.500V15H8.500V16.500" fill="none" stroke="#8a4a0c" stroke-width="1.100"/><rect x="5.300" y="19.300" width="2" height="1.600" fill="#f3d08a"/></svg>
<div class="a ind" style="left:916px"></div>
<!-- teams -->
<svg style="left:950px;top:1044px" width="26" height="24" viewBox="0 0 26 24"><defs><linearGradient id="tg1" x1="0" y1="0" x2="1" y2="1"><stop offset="0" stop-color="#8b93f5"/><stop offset="1" stop-color="#5157c9"/></linearGradient></defs><circle cx="9.500" cy="4.500" r="3.600" fill="#8e96f7"/><path d="M5 9.500H20Q23.500 9.500 23.500 13V17Q23.500 22.500 17 22.500H11Q5 22.500 5 17Z" fill="url(#tg1)"/><path d="M16 9.500H20Q23.500 9.500 23.500 13V17Q23.500 21.500 19 22.300Q16 20 16 16Z" fill="#6b73e0" opacity="0.700"/><rect x="0.500" y="10.500" width="10.500" height="10.500" rx="1.800" fill="#4349b5"/><path d="M3.300 13.300H8.200M5.750 13.300V18.700" stroke="#fff" stroke-width="1.600"/></svg>
<div class="a" style="left:964.500px;top:1039.500px;width:15.500px;height:15.500px;border-radius:8px;background:#c42b1c"></div>
<div class="t" style="left:964.500px;top:1037.500px;width:15.500px;text-align:center;font-size:11px;color:#fff">1</div>
<div class="a ind" style="left:960px"></div>
<!-- remote desktop -->
<svg style="left:995px;top:1044px" width="26" height="25" viewBox="0 0 26 25"><defs><linearGradient id="rg1" x1="0" y1="0" x2="1" y2="0.400"><stop offset="0" stop-color="#0a28b0"/><stop offset="0.550" stop-color="#1540d0"/><stop offset="1" stop-color="#9fc4f0"/></linearGradient></defs><path d="M1.500 2L17.500 1V14.500L3.500 15.500Z" fill="#8d98a8"/><path d="M2.800 3L16.300 2.200V13.500L4.500 14.300Z" fill="url(#rg1)"/><path d="M6.500 16.500L12.500 16V18.500L6.500 19Z" fill="#b9b9b9"/><ellipse cx="9.500" cy="20.500" rx="5.500" ry="1.800" fill="#c9c9c9"/><circle cx="18.500" cy="18" r="5.800" fill="#d9d9d9" stroke="#9a9a9a" stroke-width="1"/><path d="M15.500 15.800L17.800 18L15.500 20.200M21.500 15.800L19.200 18L21.500 20.200" stroke="#2e9b3c" stroke-width="1.500" fill="none"/></svg>
<!-- C icon -->
<svg style="left:1039px;top:1044px" width="24" height="24" viewBox="0 0 24 24"><circle cx="12" cy="12" r="10.500" fill="#fff" stroke="#1b5fc9" stroke-width="2.400"/><path d="M16.500 8.300A5.800 5.800 0 1 0 16.500 15.700" fill="none" stroke="#1b5fc9" stroke-width="2.600"/><path d="M12 12H22" stroke="#1b5fc9" stroke-width="2.200"/></svg>
<!-- chrome (active) -->
<div class="a" style="left:1075px;top:1036px;width:39px;height:40px;border-radius:5px;background:#fafafa;border:1px solid #e3e3e3"></div>
<svg style="left:1082px;top:1044px" width="25" height="25" viewBox="0 0 24 24"><circle cx="12" cy="12" r="11.500" fill="#fff"/><path d="M12 0.500A11.500 11.500 0 0 1 21.960 6.250H12A5.750 5.750 0 0 0 7.020 9.130L2.040 6.250A11.500 11.500 0 0 1 12 0.500Z" fill="#ea4335"/><path d="M21.960 6.250A11.500 11.500 0 0 1 12 23.500L16.980 14.870A5.750 5.750 0 0 0 16.980 9.130L17 6.250Z" fill="#fbbc04"/><path d="M12 23.500A11.500 11.500 0 0 1 2.040 6.250L7.020 14.870A5.750 5.750 0 0 0 12 17.750L16.980 14.870Z" fill="#34a853"/><circle cx="12" cy="12" r="5.300" fill="#fff"/><circle cx="12" cy="12" r="4.200" fill="#4285f4"/></svg>
<div class="a" style="left:1087px;top:1072px;width:16px;height:3px;border-radius:1.500px;background:#1a6fd4"></div>
<!-- outlook -->
<svg style="left:1126px;top:1044px" width="26" height="25" viewBox="0 0 26 25"><defs><linearGradient id="og1" x1="0" y1="0" x2="1" y2="1"><stop offset="0" stop-color="#4cc2ff"/><stop offset="1" stop-color="#0f5fc7"/></linearGradient></defs><path d="M6 7L15.500 1L25 7V19Q25 21 23 21H8Q6 21 6 19Z" fill="url(#og1)"/><path d="M6 9L15.500 15L25 9V19Q25 21 23 21H8Q6 21 6 19Z" fill="#1a6fe0" opacity="0.850"/><rect x="0.500" y="11" width="12" height="12" rx="2.500" fill="#0f4fb0"/><circle cx="6.500" cy="17" r="3" fill="none" stroke="#fff" stroke-width="1.700"/></svg>
<div class="a ind" style="left:1136px"></div>
<!-- onenote -->
<svg style="left:1170.400px;top:1045px" width="22" height="22" viewBox="0 0 25 25"><rect x="6" y="1" width="18" height="21" rx="2.500" fill="#c75fe0"/><rect x="14" y="1" width="10" height="7" fill="#e29bf0"/><rect x="14" y="8" width="10" height="7" fill="#b547d3"/><rect x="14" y="15" width="10" height="7" rx="1" fill="#8d2bb0"/><rect x="0.500" y="10.500" width="12.500" height="12.500" rx="2.500" fill="#7a1fa2"/><path d="M4 20V13.500L9.500 20V13.500" stroke="#fff" stroke-width="1.700" fill="none"/></svg>
<div class="a ind" style="left:1180px"></div>
<!-- purple Q -->
<svg style="left:1216.700px;top:1045.400px" width="20.600" height="20.600" viewBox="0 0 25 25"><rect x="0.500" y="0.500" width="24" height="24" rx="5" fill="#2f0f8a"/><circle cx="12" cy="12" r="6" fill="none" stroke="#fff" stroke-width="2.500"/><path d="M14 14L19.500 20.500" stroke="#fff" stroke-width="2.600"/><path d="M15 3L15.800 5.200L18 6L15.800 6.800L15 9L14.200 6.800L12 6L14.200 5.200Z" fill="#e85fd8"/></svg>
<div class="a ind" style="left:1224px"></div>
<!-- excel -->
<svg style="left:1258.500px;top:1045px" width="22" height="22" viewBox="0 0 25 25"><rect x="6" y="1" width="18" height="22" rx="2.500" fill="#21a366"/><rect x="15" y="1" width="9" height="7.300" fill="#7fdc6a"/><rect x="6" y="8.300" width="9" height="7.300" fill="#107c41"/><rect x="15" y="15.600" width="9" height="7.400" rx="1" fill="#185c37"/><rect x="0.500" y="10.500" width="12.500" height="12.500" rx="2.500" fill="#0e6b36"/><path d="M4 13.500L9.500 20M9.500 13.500L4 20" stroke="#fff" stroke-width="1.700"/></svg>
<div class="a ind" style="left:1268px"></div>
<!-- calculator -->
<svg style="left:1306px;top:1044px" width="18" height="24" viewBox="0 0 20 27"><rect x="0.500" y="0.500" width="19" height="26" rx="2.500" fill="#5e6670"/><rect x="3" y="3" width="14" height="5.500" fill="#35b5e8"/><g fill="#d6d9dc"><rect x="3" y="11" width="3.600" height="3.600"/><rect x="8.200" y="11" width="3.600" height="3.600"/><rect x="13.400" y="11" width="3.600" height="3.600"/><rect x="3" y="16" width="3.600" height="3.600"/><rect x="8.200" y="16" width="3.600" height="3.600"/><rect x="3" y="21" width="3.600" height="3.600"/><rect x="8.200" y="21" width="3.600" height="3.600"/></g><rect x="13.400" y="16" width="3.600" height="8.600" fill="#2f7fd6"/></svg>
<div class="a ind" style="left:1312px"></div>
<!-- acrobat -->
<svg style="left:1348.300px;top:1045px" width="21.200" height="21.200" viewBox="0 0 25 25"><rect x="0.500" y="0.500" width="24" height="24" rx="4.500" fill="#b30b00"/><path d="M5 18.500Q9 17 11.500 11Q13.500 6 12 5Q10.500 5.500 11.500 9Q13 14 20 15.500Q21.500 14 17 14Q10 14.500 5 18.500Z" fill="none" stroke="#fff" stroke-width="1.500" stroke-linejoin="round"/></svg>
<div class="a ind" style="left:1356px"></div>
<!-- tray -->
<svg style="left:1699px;top:1052px" width="12" height="8" viewBox="0 0 12 8"><path d="M1 6.500L6 1.500L11 6.500" fill="none" stroke="#1f1f1f" stroke-width="1.400"/></svg>
<svg style="left:1730px;top:1047px" width="14" height="18" viewBox="0 0 14 18"><g fill="none" stroke="#2a5fb8" stroke-width="1.300" stroke-linecap="round"><rect x="4.300" y="0.800" width="5.400" height="10" rx="2.700"/><path d="M1.700 8.500Q1.700 13.600 7 13.600Q12.300 13.600 12.300 8.500M7 13.800V17"/></g></svg>
<svg style="left:1760px;top:1048px" width="17" height="14" viewBox="0 0 17 14"><g fill="none" stroke="#1f1f1f" stroke-width="1.300" stroke-linecap="round"><path d="M1 4.500Q8.500 -2 16 4.500"/><path d="M3.500 7.500Q8.500 3 13.500 7.500"/><path d="M6 10.300Q8.500 8 11 10.300"/></g><circle cx="8.500" cy="12.300" r="1.200" fill="#1f1f1f"/></svg>
<svg style="left:1784px;top:1048px" width="18" height="16" viewBox="0 0 18 16"><path d="M1 5.500H4L8 2V14L4 10.500H1Z" fill="none" stroke="#1f1f1f" stroke-width="1.200" stroke-linejoin="round"/><g fill="none" stroke="#1f1f1f" stroke-width="1.200" stroke-linecap="round"><path d="M10.500 5.500Q12 8 10.500 10.500"/><path d="M12.800 3.500Q15.500 8 12.800 12.500"/><path d="M15 1.800Q18.500 8 15 14.200"/></g></svg>
<svg style="left:1808px;top:1047px" width="22" height="15" viewBox="0 0 22 15"><rect x="1" y="4.200" width="18.500" height="9.600" rx="3" fill="#efefef" stroke="#1f1f1f" stroke-width="1.200"/><rect x="2.600" y="5.800" width="15.300" height="6.400" rx="1.600" fill="#107c10"/><path d="M20.300 7V11" stroke="#1f1f1f" stroke-width="1.600" stroke-linecap="round"/><path d="M11.600 0.200L7.600 6.400H10L8.800 10.300L13.200 4.400H10.700Z" fill="#111" stroke="#eeeeee" stroke-width="1.300" paint-order="stroke" stroke-linejoin="round"/></svg>
<div class="t" id="clk1" style="left:1801px;top:1038px;width:100px;text-align:right;font-size:11.600px;color:#1f1f1f">12:06 PM</div>
<div class="t" id="clk2" style="left:1801px;top:1054.600px;width:100px;text-align:right;font-size:12.400px;color:#1f1f1f">3/24/2026</div>


</body>
</html>
